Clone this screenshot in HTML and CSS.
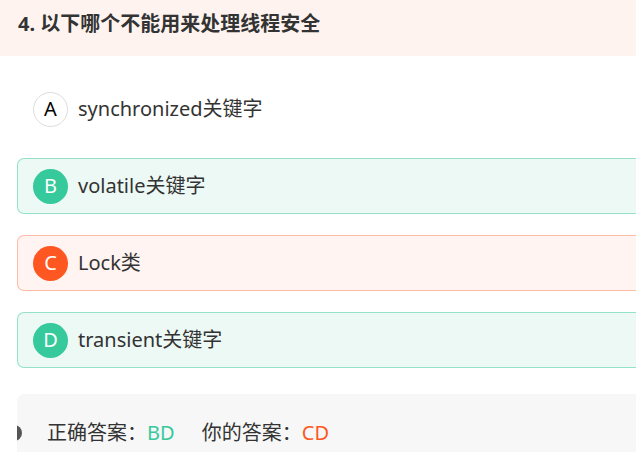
FILE: index.html
```html
<!DOCTYPE html>
<html lang="zh-CN">
<head>
<meta charset="utf-8">
<link rel="stylesheet" href="styles.css">
</head>
<body>
<div class="page">
  <div class="q-header">4. 以下哪个不能用来处理线程安全</div>
  <div class="options">
    <div class="option">
      <span class="badge badge-plain">A</span>
      <span class="opt-text">synchronized关键字</span>
    </div>
    <div class="option option-right">
      <span class="badge badge-green">B</span>
      <span class="opt-text">volatile关键字</span>
    </div>
    <div class="option option-wrong">
      <span class="badge badge-red">C</span>
      <span class="opt-text">Lock类</span>
    </div>
    <div class="option option-right">
      <span class="badge badge-green">D</span>
      <span class="opt-text">transient关键字</span>
    </div>
  </div>
  <div class="answer">
    <span class="answer-dot"></span>
    <span class="answer-label">正确答案：</span><span class="ok">BD</span>
    <span class="answer-label mine">你的答案：</span><span class="bad">CD</span>
  </div>
</div>
</body>
</html>
```
FILE: styles.css
```css
html, body {
  margin: 0;
  padding: 0;
  background: #ffffff;
  overflow: hidden;
}
body {
  font-family: "Noto Sans", "Noto Sans CJK SC", sans-serif;
  color: #333333;
  width: 636px;
  height: 452px;
}
.page {
  width: 636px;
}
.q-header {
  background: #fef3ef;
  height: 56px;
  box-sizing: border-box;
  padding: 9px 0 0 18px;
  font-size: 20px;
  line-height: 30px;
  font-weight: 700;
  color: #333333;
  white-space: nowrap;
}
.options {
  padding: 25px 0 0 17px;
  display: flex;
  flex-direction: column;
  gap: 21px;
}
.option {
  height: 56px;
  box-sizing: border-box;
  border: 1px solid transparent;
  border-right: none;
  border-radius: 7px 0 0 7px;
  display: flex;
  align-items: center;
  padding-left: 15px;
  gap: 10px;
}
.option-right {
  background: #edf9f5;
  border-color: #95e2c6;
}
.option-wrong {
  background: #fff4f1;
  border-color: #ffbba6;
}
.badge {
  width: 35px;
  height: 35px;
  box-sizing: border-box;
  border-radius: 50%;
  display: flex;
  align-items: center;
  justify-content: center;
  font-size: 20px;
  line-height: 1;
  flex: none;
}
.badge-plain {
  border: 1px solid #dddddd;
  background: #ffffff;
  color: #000000;
}
.badge-green {
  background: #35c99b;
  color: #ffffff;
}
.badge-red {
  background: #ff5722;
  color: #ffffff;
}
.opt-text {
  font-size: 20px;
  line-height: 30px;
  color: #333333;
  white-space: nowrap;
}
.answer {
  position: relative;
  overflow: hidden;
  margin: 26px 0 0 17px;
  height: 80px;
  box-sizing: border-box;
  background: #f7f7f7;
  border-radius: 8px 0 0 8px;
  padding: 24px 0 0 30px;
  font-size: 20px;
  line-height: 30px;
  white-space: nowrap;
}
.answer-dot {
  position: absolute;
  left: -11px;
  top: 31px;
  width: 16px;
  height: 16px;
  border-radius: 50%;
  background: #555555;
}
.answer-label {
  color: #333333;
}
.mine {
  margin-left: 22px;
}
.ok {
  color: #35c99b;
}
.bad {
  color: #ff5722;
}
```
